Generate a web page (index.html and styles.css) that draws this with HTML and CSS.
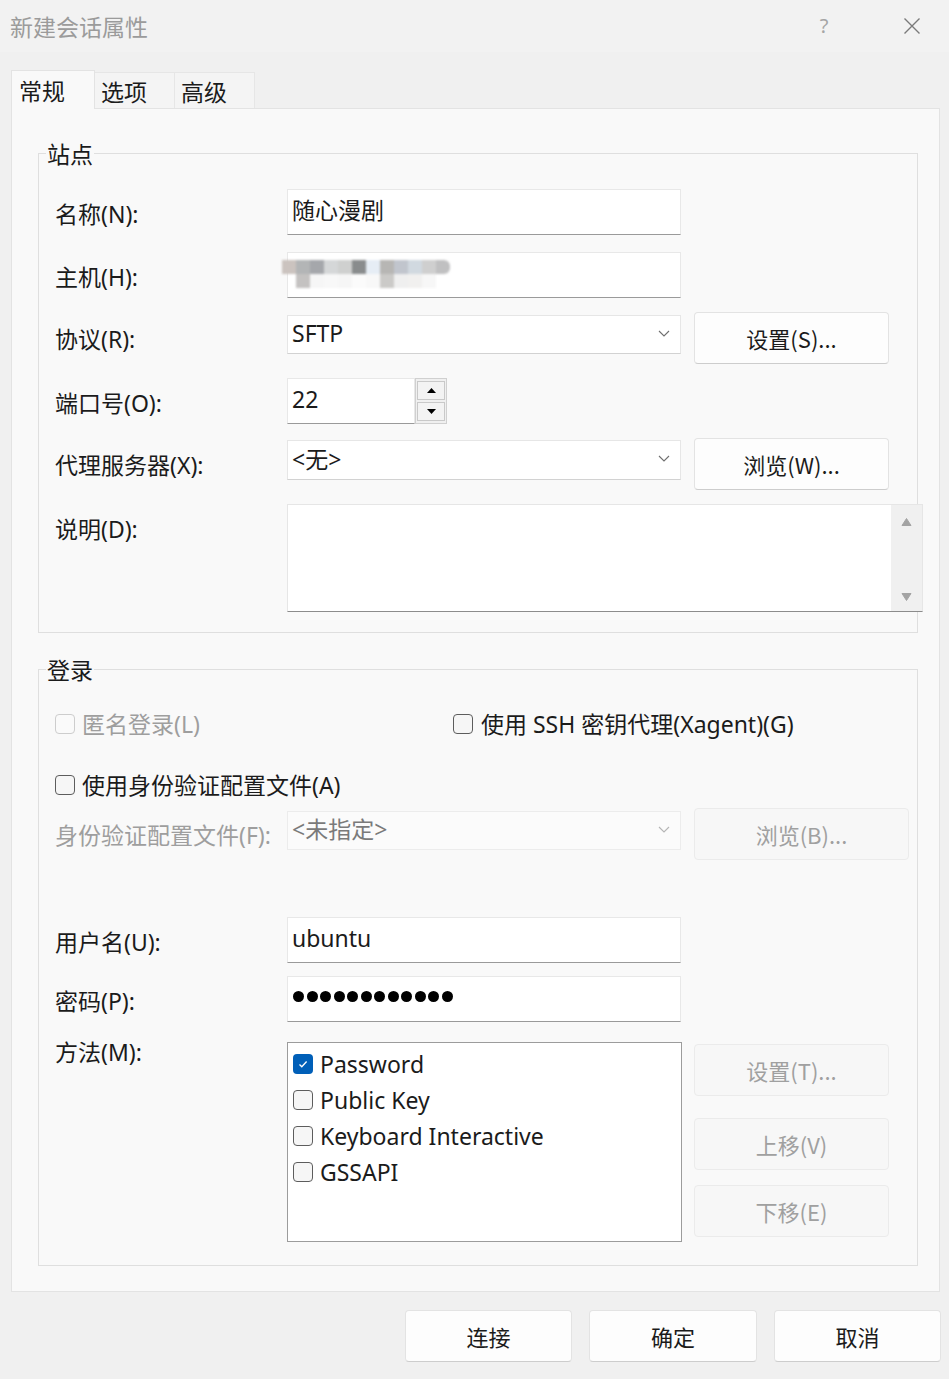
FILE: index.html
```html
<!DOCTYPE html>
<html lang="zh-CN">
<head>
  <meta charset="UTF-8">
  <title>新建会话属性</title>
  <link rel="stylesheet" href="styles.css">
</head>
<body>

  <header class="titlebar">
    <span class="title">新建会话属性</span>
    <span class="help">?</span>
    <svg class="close" width="18" height="18" viewBox="0 0 18 18"><path d="M1.5 1.5L16.5 16.5M16.5 1.5L1.5 16.5" stroke="#7a7a7a" stroke-width="1.4"/></svg>
  </header>

  <nav class="tabs">
    <span class="tab active">常规</span>
    <span class="tab">选项</span>
    <span class="tab">高级</span>
  </nav>

  <section class="panel">

    <fieldset class="group site">
      <legend>站点</legend>

      <div class="row">
        <label>名称(N):</label>
        <div class="textbox">随心漫剧</div>
      </div>

      <div class="row host">
        <label>主机(H):</label>
        <div class="textbox">
          <!-- masked host address -->
          <div class="mosaic">
            <i style="background:#cbc3bf"></i><i style="background:#b3b5b6"></i><i style="background:#a5a7ab"></i><i style="background:#d5d7d8"></i><i style="background:#cfd0cf"></i><i style="background:#898c8d"></i><i style="background:#e6edf5"></i><i style="background:#b7b6b4"></i><i style="background:#c1c5cd"></i><i style="background:#d1d9e0"></i><i style="background:#cfcfcf"></i><i style="background:#c0c0c1"></i>
            <i></i><i style="background:#c4c2c1"></i><i style="background:#f6f6f6"></i><i style="background:#f8f8f8"></i><i style="background:#f6f6f6"></i><i style="background:#fbfbfb"></i><i style="background:#f8f8f8"></i><i style="background:#cbcac8"></i><i style="background:#efefef"></i><i style="background:#f1f0ef"></i><i style="background:#f7f7f7"></i><i></i>
          </div>
        </div>
      </div>

      <div class="row tall">
        <label>协议(R):</label>
        <div class="select">
          <span>SFTP</span>
          <svg width="12" height="7" viewBox="0 0 12 7"><path d="M1 1l5 5 5-5" fill="none" stroke="#6f6f6f" stroke-width="1.1"/></svg>
        </div>
        <button class="btn">设置(S)...</button>
      </div>

      <div class="row">
        <label>端口号(O):</label>
        <div class="spinner">
          <div class="textbox port">22</div>
          <div class="spin">
            <span><svg width="9" height="5" viewBox="0 0 9 5"><path d="M0 5h9L4.5 0z"/></svg></span>
            <span><svg width="9" height="5" viewBox="0 0 9 5"><path d="M0 0h9L4.5 5z"/></svg></span>
          </div>
        </div>
      </div>

      <div class="row tall">
        <label>代理服务器(X):</label>
        <div class="select proxy">
          <span>&lt;无&gt;</span>
          <svg width="12" height="7" viewBox="0 0 12 7"><path d="M1 1l5 5 5-5" fill="none" stroke="#6f6f6f" stroke-width="1.1"/></svg>
        </div>
        <button class="btn">浏览(W)...</button>
      </div>

      <div class="row memo-row">
        <label>说明(D):</label>
        <div class="memo">
          <div class="scroll">
            <svg width="11" height="8" viewBox="0 0 11 8"><path d="M1 7.5h9L5.5 0.5z" fill="#a3a3a3" stroke="#a3a3a3" stroke-linejoin="round"/></svg>
            <svg width="11" height="8" viewBox="0 0 11 8"><path d="M1 0.5h9L5.5 7.5z" fill="#a3a3a3" stroke="#a3a3a3" stroke-linejoin="round"/></svg>
          </div>
        </div>
      </div>
    </fieldset>

    <fieldset class="group login">
      <legend>登录</legend>

      <div class="checks">
        <span class="check disabled anon"><i class="box"></i>匿名登录(L)</span>
        <span class="check agent"><i class="box"></i>使用 SSH 密钥代理(Xagent)(G)</span>
      </div>

      <div class="checks profile-check">
        <span class="check"><i class="box"></i>使用身份验证配置文件(A)</span>
      </div>

      <div class="row tall profile">
        <label class="disabled">身份验证配置文件(F):</label>
        <div class="select disabled">
          <span>&lt;未指定&gt;</span>
          <svg width="12" height="7" viewBox="0 0 12 7"><path d="M1 1l5 5 5-5" fill="none" stroke="#b5b5b5" stroke-width="1.1"/></svg>
        </div>
        <button class="btn disabled wide">浏览(B)...</button>
      </div>

      <div class="row user">
        <label>用户名(U):</label>
        <div class="textbox">ubuntu</div>
      </div>

      <div class="row pass">
        <label>密码(P):</label>
        <div class="textbox dots">
          <i></i><i></i><i></i><i></i><i></i><i></i><i></i><i></i><i></i><i></i><i></i><i></i>
        </div>
      </div>

      <div class="row methods">
        <label>方法(M):</label>
        <div class="listbox">
          <span class="check item on"><i class="box"><svg width="20" height="20" viewBox="0 0 20 20"><path d="M6.5 10.5l2.3 2.3 4.8-5.3" fill="none" stroke="#fff" stroke-width="1.3"/></svg></i>Password</span>
          <span class="check item"><i class="box"></i>Public Key</span>
          <span class="check item"><i class="box"></i>Keyboard Interactive</span>
          <span class="check item"><i class="box"></i>GSSAPI</span>
        </div>
        <div class="side">
          <button class="btn disabled">设置(T)...</button>
          <button class="btn disabled up">上移(V)</button>
          <button class="btn disabled down">下移(E)</button>
        </div>
      </div>
    </fieldset>

  </section>

  <footer class="footer">
    <button class="btn action">连接</button>
    <button class="btn action mid">确定</button>
    <button class="btn action">取消</button>
  </footer>

</body>
</html>
```

FILE: styles.css
```css
:root {
  --text: #1b1b1b;
  --muted: #9e9e9e;
  --line: #e3e3e3;
  --panel: #f9f9f9;
  --cjk: "Noto Sans CJK SC", sans-serif;
}
* {
  margin: 0;
  padding: 0;
  box-sizing: border-box;
}
body {
  width: 949px;
  height: 1379px;
  overflow: hidden;
  background: #f0f0f0;
  color: var(--text);
  font-family: "Noto Sans", "Noto Sans CJK SC", sans-serif;
  font-size: 23px;
  line-height: 28px;
}

/* Title bar */
.titlebar {
  height: 52px;
  display: flex;
  align-items: center;
  padding-left: 10px;
  background: #f2f2f2;
}
.title {
  flex: 1;
  font-family: var(--cjk);
  font-size: 23px;
  color: #9b9b9b;
}
.help {
  width: 20px;
  text-align: center;
  font-size: 20px;
  color: #a5a5a5;
  margin-right: 69px;
}
.close {
  margin-right: 28px;
}

/* Tabs */
.tabs {
  display: flex;
  align-items: flex-end;
  height: 38px;
  margin: 18px 0 0 11px;
  position: relative;
  z-index: 1;
}
.tab {
  width: 80px;
  height: 36px;
  padding-left: 6px;
  font-family: var(--cjk);
  font-size: 23px;
  line-height: 36px;
  background: #f4f4f4;
  border: 1px solid #e6e6e6;
  border-bottom: none;
}
.tab + .tab {
  border-left: none;
}
.tab.active {
  width: 84px;
  height: 39px;
  margin-bottom: -1px;
  padding-left: 7px;
  line-height: 38px;
  background: var(--panel);
  border-color: var(--line);
}

/* Tab page */
.panel {
  margin: 0 9px 0 11px;
  padding: 30px 0 25px 26px;
  background: var(--panel);
  border: 1px solid var(--line);
}

.group {
  width: 880px;
  min-inline-size: 0;
  border: 1px solid #dfdfdf;
  padding: 22px 16px 20px;
  display: flex;
  flex-direction: column;
}
.group legend {
  margin-left: -9px;
  padding: 0 1px;
  font-family: var(--cjk);
  font-size: 23px;
  line-height: 28px;
}
.login {
  margin-top: 22px;
  padding: 25px 16px 23px;
}

/* Form rows */
.row {
  display: flex;
  align-items: center;
  height: 46px;
}
.site .row + .row {
  margin-top: 14px;
}
.site .row.host {
  margin-top: 17px;
}
.row.tall {
  height: 52px;
  align-items: flex-start;
}
.row > label {
  width: 232px;
  flex: none;
  padding-top: 3px;
}
.row.tall > label {
  padding-top: 13px;
}
label.disabled {
  color: var(--muted);
}

.textbox {
  width: 394px;
  height: 46px;
  flex: none;
  display: flex;
  align-items: center;
  padding: 0 4px 5px;
  background: #fff;
  border: 1px solid #e8e8e8;
  border-bottom-color: #9a9a9a;
}

.mosaic {
  display: grid;
  grid-template-columns: repeat(12, 14px);
  grid-auto-rows: 14px;
  margin: 0 0 -2px -10px;
  filter: blur(1px);
}
.mosaic i:nth-child(12) {
  border-radius: 0 6px 6px 0;
}

.select {
  width: 394px;
  height: 39px;
  flex: none;
  margin-top: 3px;
  display: flex;
  align-items: center;
  justify-content: space-between;
  padding: 0 10px 3px 4px;
  background: #fff;
  border: 1px solid #e6e6e6;
  border-bottom-color: #d2d2d2;
}
.select.proxy {
  margin-top: 2px;
  height: 40px;
}
.select.disabled {
  background: #fbfbfb;
  border-color: #ececec;
  color: #7a7a7a;
}

.btn {
  width: 195px;
  height: 52px;
  flex: none;
  margin-left: 13px;
  font-family: var(--cjk);
  font-size: 22px;
  color: var(--text);
  background: #fdfdfd;
  border: 1px solid #e3e3e3;
  border-bottom-color: #cdcdcd;
  border-radius: 4px;
}
.btn.disabled {
  color: #a0a0a0;
  background: #f7f7f7;
  border-color: #ebebeb;
}
.btn.wide {
  width: 215px;
}

/* Port spinner */
.spinner {
  display: flex;
}
.textbox.port {
  width: 128px;
}
.spin {
  width: 32px;
  height: 46px;
  display: flex;
  flex-direction: column;
  gap: 2px;
  padding: 2px 1px;
  background: #f0f0f0;
  border: 1px solid #d0d0d0;
}
.spin span {
  flex: 1;
  display: flex;
  align-items: center;
  justify-content: center;
  background: #f3f3f3;
  border: 1px solid #c9c9c9;
}

/* Description */
.row.memo-row {
  height: 108px;
  align-items: flex-start;
}
.memo-row > label {
  padding-top: 11px;
}
.memo {
  width: 636px;
  height: 108px;
  flex: none;
  display: flex;
  justify-content: flex-end;
  background: #fff;
  border: 1px solid #e6e6e6;
  border-bottom-color: #8c8c8c;
}
.scroll {
  width: 31px;
  display: flex;
  flex-direction: column;
  justify-content: space-between;
  align-items: center;
  padding: 13px 0 10px;
  background: #f0f0f0;
}

/* Checkboxes */
.checks {
  display: flex;
  align-items: center;
  height: 32px;
}
.checks.profile-check {
  margin-top: 29px;
}
.check {
  display: flex;
  align-items: center;
  gap: 7px;
}
.check.anon {
  width: 398px;
}
.check.agent {
  gap: 8px;
}
.check.disabled {
  color: var(--muted);
}
.box {
  width: 20px;
  height: 20px;
  flex: none;
  display: flex;
  border: 1.5px solid #5d5d5d;
  border-radius: 4px;
  background: #f6f6f6;
}
.check.disabled .box {
  border-color: #cdcdcd;
  background: #fafafa;
}
.check.on .box {
  border: none;
  background: #005fb8;
}

/* Login rows */
.login .row.profile {
  margin-top: 7px;
}
.login .row.user {
  margin-top: 57px;
}
.login .row.pass {
  margin-top: 13px;
}
.textbox.dots {
  gap: 2.5px;
  padding-left: 5px;
}
.dots i {
  width: 11px;
  height: 11px;
  border-radius: 50%;
  background: #000;
}

.row.methods {
  height: 200px;
  margin-top: 20px;
  align-items: flex-start;
}
.methods > label {
  padding-top: 0;
  margin-top: -4px;
}
.listbox {
  width: 395px;
  height: 200px;
  flex: none;
  padding: 3px 0 0 5px;
  background: #fff;
  border: 1px solid #9c9c9c;
}
.check.item {
  height: 36px;
}
.side {
  display: flex;
  flex-direction: column;
  padding-top: 2px;
}
.side .btn {
  margin-left: 12px;
}
.side .up {
  margin-top: 22px;
}
.side .down {
  margin-top: 15px;
}

/* Dialog buttons */
.footer {
  display: flex;
  justify-content: flex-end;
  gap: 17px;
  padding: 18px 8px 0 0;
}
.btn.action {
  width: 167px;
  margin-left: 0;
}
.btn.action.mid {
  width: 168px;
}
```
